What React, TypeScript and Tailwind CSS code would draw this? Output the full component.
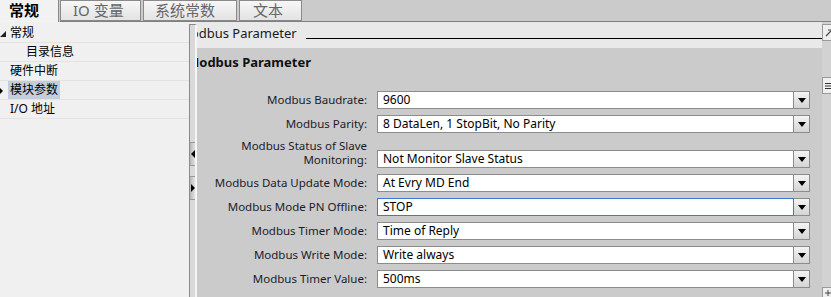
import React from "react";

const ui = { fontFamily: '"Noto Sans", "Noto Sans CJK SC", sans-serif' };
const cjk = { fontFamily: '"Noto Sans", "Noto Sans CJK SC", sans-serif' };

type Row = { label: string[]; value: string; focus?: boolean };

const rows: Row[] = [
  { label: ["Modbus Baudrate:"], value: "9600" },
  { label: ["Modbus Parity:"], value: "8 DataLen, 1 StopBit, No Parity" },
  { label: ["Modbus Status of Slave", "Monitoring:"], value: "Not Monitor Slave Status" },
  { label: ["Modbus Data Update Mode:"], value: "At Evry MD End" },
  { label: ["Modbus Mode PN Offline:"], value: "STOP", focus: true },
  { label: ["Modbus Timer Mode:"], value: "Time of Reply" },
  { label: ["Modbus Write Mode:"], value: "Write always" },
  { label: ["Modbus Timer Value:"], value: "500ms" },
];

const Caret = () => (
  <svg width="8" height="5" viewBox="0 0 8 5">
    <path d="M0 0H8L4 5Z" fill="#000" />
  </svg>
);

const Select = ({ value, focus }: { value: string; focus?: boolean }) => (
  <div className="flex h-[18px] w-[433px]">
    <div
      className={
        "flex-1 bg-white border flex items-center pl-[5px] text-[12px] text-black " +
        (focus ? "border-[#3b78d8]" : "border-[#8c8c8c]")
      }
    >
      {value}
    </div>
    <div className="w-[16px] border border-l-0 border-[#8c8c8c] bg-gradient-to-b from-[#f4f4f4] to-[#d4d4d4] flex items-center justify-center">
      <Caret />
    </div>
  </div>
);

const Tab = ({ label, w, pl }: { label: string; w: string; pl: string }) => (
  <div
    className={
      "h-[21px] border border-[#8a8a8a] bg-gradient-to-b from-[#f7f7f7] to-[#e3e3e3] text-[15px] text-[#666] leading-[19px] mr-[2px] " +
      w +
      " " +
      pl
    }
    style={cjk}
  >
    {label}
  </div>
);

const TreeItem = ({
  label,
  indent,
  selected,
  open,
}: {
  label: string;
  indent: string;
  selected?: boolean;
  open?: boolean;
}) => (
  <div className="relative h-[19px] border-b border-[#e3e3e3] flex items-center">
    {open && (
      <svg className="absolute left-0 top-[7px]" width="6" height="6" viewBox="0 0 6 6">
        <path d="M6 0V6H0Z" fill="#222" />
      </svg>
    )}
    {selected && (
      <svg className="absolute left-0 top-[7px]" width="3" height="6" viewBox="0 0 3 6">
        <path d="M0 0L3 3L0 6Z" fill="#000" />
      </svg>
    )}
    <span
      className={
        "text-[12px] text-black leading-[18px] px-[2px] " +
        indent +
        (selected ? " bg-[#c4cedb]" : "")
      }
      style={cjk}
    >
      {label}
    </span>
  </div>
);

export default function App() {
  return (
    <div className="w-[831px] h-[297px] overflow-hidden bg-[#cbcbcb] flex flex-col" style={ui}>
      {/* tabs */}
      <div className="h-[22px] flex items-end">
        <div
          className="h-[22px] w-[59px] bg-[#f2f2f2] border-r border-[#8a8a8a] pl-[9px] text-[15px] font-bold text-black leading-[21px] mr-[1px]"
          style={cjk}
        >
          常规
        </div>
        <div className="flex items-start h-[22px] border-b border-[#808080]">
          <Tab label="IO 变量" w="w-[81px]" pl="pl-[12px]" />
          <Tab label="系统常数" w="w-[94px]" pl="pl-[11px]" />
          <Tab label="文本" w="w-[63px]" pl="pl-[13px]" />
        </div>
        <div className="flex-1 h-[22px] border-b border-[#808080]" />
      </div>

      <div className="flex flex-1 min-h-0">
        {/* tree */}
        <div className="w-[189px] bg-[#f0f0f0] pt-[2px]">
          <TreeItem label="常规" indent="ml-[8px]" open />
          <TreeItem label="目录信息" indent="ml-[24px]" />
          <TreeItem label="硬件中断" indent="ml-[8px]" />
          <TreeItem label="模块参数" indent="ml-[8px]" selected />
          <TreeItem label="I/O 地址" indent="ml-[8px]" />
        </div>

        {/* splitter */}
        <div className="w-[8px] bg-[#f0f0f0] pt-[2px]">
          <div className="h-full border-l border-t border-[#8a8a8a] bg-[#d9d9d9] border-r-2 border-r-[#f6f6f6] flex flex-col">
            <div className="h-[117px]" />
            <div className="h-[24px] bg-gradient-to-r from-[#b8b8b8] to-[#e2e2e2] border-y border-[#9a9a9a] flex items-center justify-center">
              <svg width="4" height="8" viewBox="0 0 4 8">
                <path d="M4 0V8L0 4Z" fill="#000" />
              </svg>
            </div>
            <div className="h-[10px]" />
            <div className="h-[24px] bg-gradient-to-r from-[#b8b8b8] to-[#e2e2e2] border-y border-[#9a9a9a] flex items-center justify-center">
              <svg width="4" height="8" viewBox="0 0 4 8">
                <path d="M0 0V8L4 4Z" fill="#000" />
              </svg>
            </div>
          </div>
        </div>

        {/* content */}
        <div className="flex-1 min-w-0 overflow-hidden flex flex-col">
          <div className="h-[26px] bg-[#e9e9e9] flex items-start">
            <span className="ml-[-18px] mt-[3px] text-[13px] leading-[16px] text-[#1a1a1a] whitespace-nowrap">
              Modbus Parameter
            </span>
            <div className="flex-1 h-px bg-black mt-[16px] ml-[9px]" />
          </div>
          <div className="ml-[-10px] mt-[6px] text-[13px] leading-[16px] font-bold text-[#111] whitespace-nowrap">
            Modbus Parameter
          </div>

          <div className="mt-[21px] grid grid-cols-[170px_433px] gap-x-[10px] gap-y-[6px] items-end">
            {rows.map((r) => (
              <React.Fragment key={r.value}>
                <div
                  className={
                    "text-right text-[11.5px] text-[#1b1b2a] whitespace-nowrap " +
                    (r.label.length > 1 ? "leading-[14px] pb-[1px]" : "leading-[18px]")
                  }
                >
                  {r.label.map((l) => (
                    <div key={l}>{l}</div>
                  ))}
                </div>
                <Select value={r.value} focus={r.focus} />
              </React.Fragment>
            ))}
          </div>
        </div>

        {/* right edge strip */}
        <div className="w-[9px] bg-[#d2d2d2] overflow-hidden flex flex-col">
          <div className="h-[2px]" />
          <div className="w-[16px] h-[17px] border border-[#9a9a9a] bg-[#efefef] flex items-center pl-[2px]">
            <svg width="8" height="8" viewBox="0 0 8 8">
              <path d="M1 7L6 2M3 1H7V5" stroke="#444" strokeWidth="1.2" fill="none" />
            </svg>
          </div>
          <div className="h-[36px]" />
          <div className="w-[16px] h-[17px] border border-[#9a9a9a] bg-[#efefef] flex items-center pl-[2px]">
            <svg width="8" height="8" viewBox="0 0 8 8">
              <path d="M0 1.5H8M0 4H8M0 6.5H8" stroke="#333" strokeWidth="1" fill="none" />
            </svg>
          </div>
          <div className="flex-1" />
          <div className="w-[16px] h-[10px] border border-b-0 border-[#9a9a9a] bg-[#efefef] flex items-start pl-[2px] pt-[2px]">
            <svg width="6" height="6" viewBox="0 0 6 6">
              <path d="M3 0V6M0 3H6" stroke="#444" strokeWidth="1" fill="none" />
            </svg>
          </div>
        </div>
      </div>
    </div>
  );
}
